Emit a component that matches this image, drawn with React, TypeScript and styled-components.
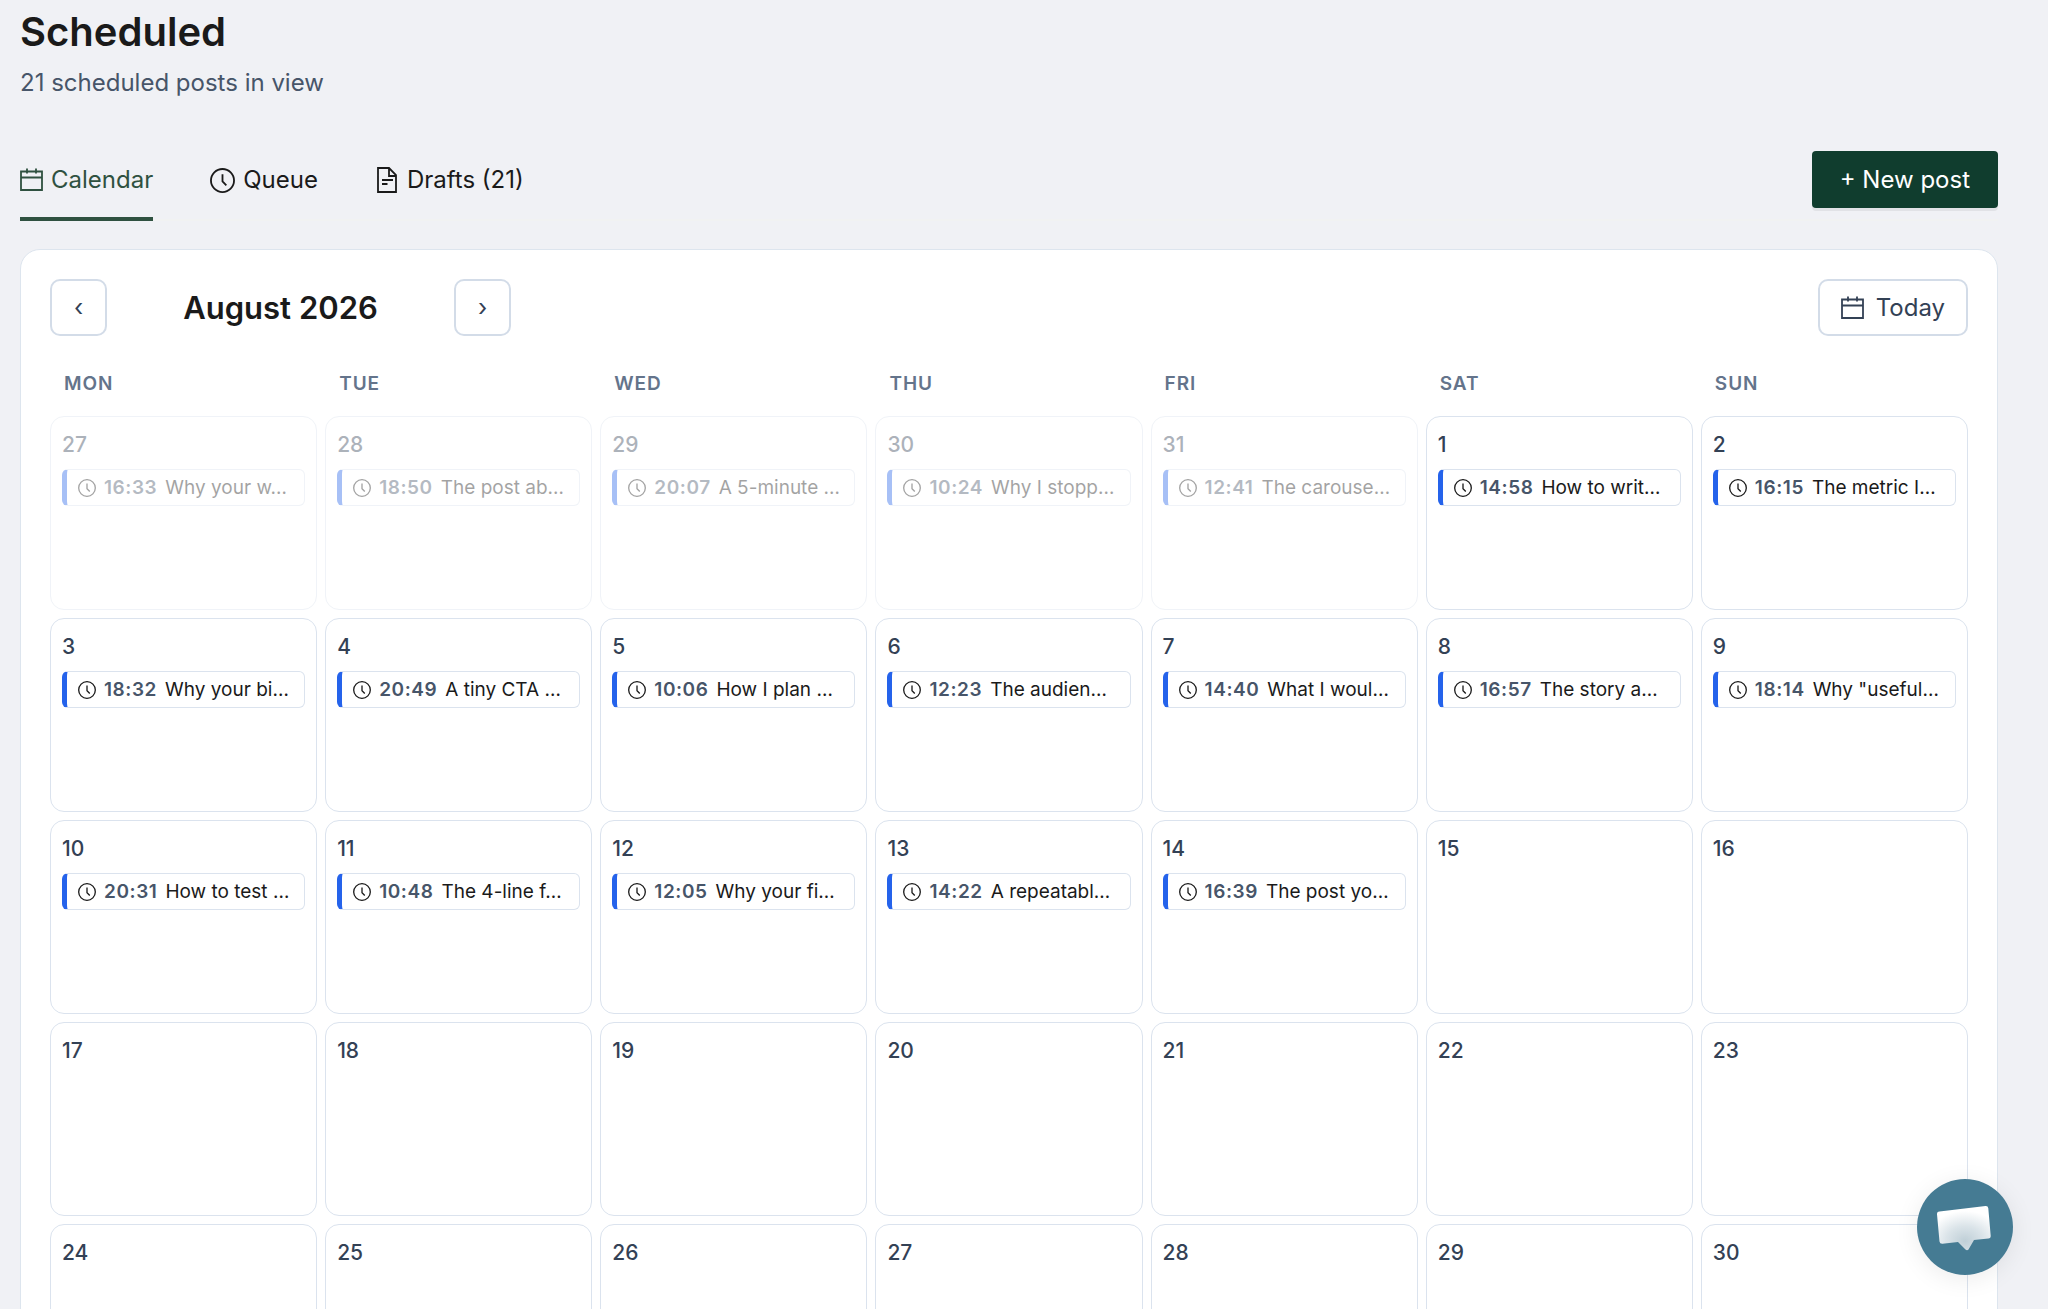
import React from "react";
import styled, { createGlobalStyle, css } from "styled-components";

const GlobalStyle = createGlobalStyle`
  *, *::before, *::after { box-sizing: border-box; }
  body {
    margin: 0;
    background: #f0f1f5;
    color: #1a1a1a;
    font-family: Inter, "Noto Sans", sans-serif;
    font-size: 24px;
    line-height: 32px;
  }
  button { font: inherit; cursor: pointer; }
`;

const Page = styled.main`
  height: 100vh;
  overflow: hidden;
  padding: 4px 50px 0 20px;
`;

const Title = styled.h1`
  margin: 0;
  font-size: 40px;
  line-height: 56px;
  font-weight: 600;
`;

const Subtitle = styled.p`
  margin: 7px 0 0;
  color: #475569;
`;

const TabBar = styled.div`
  display: flex;
  justify-content: space-between;
  align-items: flex-start;
  margin-top: 52px;
  border-bottom: 2px solid #f1f2f2;
`;

const TabList = styled.nav`
  display: flex;
  gap: 57px;
  margin-bottom: -2px;
`;

const Tab = styled.button<{ $active?: boolean }>`
  display: flex;
  align-items: center;
  gap: 8px;
  height: 70px;
  padding: 0 0 8px;
  border: 0;
  border-bottom: 4px solid ${(p) => (p.$active ? "#2f5140" : "transparent")};
  background: none;
  color: ${(p) => (p.$active ? "#2f5140" : "#1a1a1a")};
`;

const NewPost = styled.button`
  height: 57px;
  padding: 0 28px;
  border: 0;
  border-radius: 4px;
  background: #103d2e;
  color: #fff;
  box-shadow: 0 3px 0 rgba(0, 0, 0, 0.06);
`;

const Card = styled.section`
  margin-top: 28px;
  padding: 29px;
  border: 1px solid #dde5ee;
  border-radius: 20px;
  background: #fff;
`;

const Toolbar = styled.div`
  display: flex;
  align-items: center;
  justify-content: space-between;
`;

const MonthNav = styled.div`
  display: flex;
  align-items: center;
`;

const outlined = css`
  height: 57px;
  border: 2px solid #d3dce8;
  border-radius: 10px;
  background: #fff;
  color: #334155;
`;

const Arrow = styled.button`
  ${outlined}
  width: 57px;
  padding: 0;
`;

const Month = styled.h2`
  width: 347px;
  margin: 0;
  font-size: 31px;
  line-height: 40px;
  font-weight: 600;
  text-align: center;
`;

const Today = styled.button`
  ${outlined}
  display: flex;
  align-items: center;
  gap: 12px;
  padding: 0 21px;
`;

const weekGrid = css`
  display: grid;
  grid-template-columns: repeat(7, minmax(0, 1fr));
  gap: 8px;
`;

const Weekdays = styled.div`
  ${weekGrid}
  margin-top: 34px;
`;

const Weekday = styled.div`
  padding: 0 14px;
  color: #64748b;
  font-size: 19px;
  line-height: 28px;
  font-weight: 600;
  letter-spacing: 0.05em;
`;

const Days = styled.div`
  ${weekGrid}
  grid-auto-rows: 194px;
  margin-top: 18px;
`;

const Day = styled.div<{ $outside?: boolean }>`
  padding: 14px 11px;
  border: 1px solid #dbe3ee;
  border-radius: 14px;
  background: #fff;
  opacity: ${(p) => (p.$outside ? 0.4 : 1)};
`;

const DayNumber = styled.div`
  color: #334155;
  font-size: 21px;
  line-height: 28px;
  font-weight: 500;
`;

const Post = styled.button`
  display: flex;
  align-items: center;
  gap: 8px;
  width: 100%;
  height: 37px;
  margin-top: 10px;
  padding: 0 8px 0 11px;
  border: 1px solid #dbe3ee;
  border-left: 5px solid #2563eb;
  border-radius: 6px;
  background: #fff;
  color: #1a1a1a;
  font-size: 19px;
  line-height: 26px;
  text-align: left;
  white-space: nowrap;
`;

const Time = styled.span`
  color: #475569;
  font-weight: 600;
  letter-spacing: 0.03em;
`;

const PostTitle = styled.span`
  flex: 1;
  min-width: 0;
`;

const Chat = styled.button`
  position: fixed;
  right: 35px;
  bottom: 34px;
  width: 96px;
  height: 96px;
  padding: 0;
  border: 0;
  border-radius: 50%;
  background: #457b93;
  box-shadow: 0 4px 24px rgba(0, 0, 0, 0.08);
`;

const Icon = styled.svg`
  display: block;
  flex: none;
  fill: none;
  stroke: currentColor;
`;

const CalendarIcon = () => (
  <Icon width="23" height="24" viewBox="0 0 23 24" strokeWidth="1.8" aria-hidden="true">
    <path d="M1 3.500h21v18.500H1zM1 9.500h21M7 .5v5M16 .5v5" />
  </Icon>
);

const ClockIcon = ({ size }: { size: number }) => (
  <Icon width={size} height={size} viewBox="0 0 26 26" strokeWidth="1.9" aria-hidden="true">
    <circle cx="13" cy="13" r="12" />
    <path d="M13 6.500v7.500l4 4" />
  </Icon>
);

const DraftIcon = () => (
  <Icon width="24" height="26" viewBox="0 0 24 26" strokeWidth="1.8" aria-hidden="true">
    <path d="M3 1h11l7 7v17H3zM14 1v8h7M7 13h11M7 17h5.500" />
  </Icon>
);

const ChatIcon = () => (
  <svg width="96" height="96" viewBox="0 0 96 96" aria-hidden="true">
    <defs>
      <radialGradient id="bubble" gradientUnits="userSpaceOnUse" cx="0" cy="0" r="1" gradientTransform="translate(48 62) scale(38 30)">
        <stop offset="0" stopColor="#bfcfd7" />
        <stop offset="0.500" stopColor="#dbe4e9" />
        <stop offset="1" stopColor="#fff" />
      </radialGradient>
    </defs>
    <path
      fill="url(#bubble)"
      d="M22.500 32.500 68.500 27q2.500-.2 2.800 2.300l2.400 27.500q.2 2.500-2.300 2.800L57 61l-5.500 9.500q-1.500 1.500-3 0L41 63l-15.500 1.700q-2.700.2-3-2.300L20 35.300q-.2-2.500 2.500-2.800z"
    />
  </svg>
);

const WEEKDAYS = ["MON", "TUE", "WED", "THU", "FRI", "SAT", "SUN"];

const POSTS: [string, string][] = [
  ["16:33", "Why your w…"],
  ["18:50", "The post ab…"],
  ["20:07", "A 5-minute …"],
  ["10:24", "Why I stopp…"],
  ["12:41", "The carouse…"],
  ["14:58", "How to writ…"],
  ["16:15", "The metric I…"],
  ["18:32", "Why your bi…"],
  ["20:49", "A tiny CTA …"],
  ["10:06", "How I plan …"],
  ["12:23", "The audien…"],
  ["14:40", "What I woul…"],
  ["16:57", "The story a…"],
  ["18:14", 'Why "useful…'],
  ["20:31", "How to test …"],
  ["10:48", "The 4-line f…"],
  ["12:05", "Why your fi…"],
  ["14:22", "A repeatabl…"],
  ["16:39", "The post yo…"],
];

const FIRST = new Date(2026, 6, 27);

const DAYS = Array.from({ length: 35 }, (_, i) => {
  const date = new Date(FIRST);
  date.setDate(FIRST.getDate() + i);
  return { number: date.getDate(), outside: date.getMonth() !== 7, post: POSTS[i] };
});

export default function App() {
  return (
    <>
      <GlobalStyle />
      <Page>
        <Title>Scheduled</Title>
        <Subtitle>21 scheduled posts in view</Subtitle>
        <TabBar>
          <TabList>
            <Tab $active><CalendarIcon />Calendar</Tab>
            <Tab><ClockIcon size={25} />Queue</Tab>
            <Tab><DraftIcon />Drafts (21)</Tab>
          </TabList>
          <NewPost>+ New post</NewPost>
        </TabBar>
        <Card>
          <Toolbar>
            <MonthNav>
              <Arrow aria-label="Previous month">‹</Arrow>
              <Month>August 2026</Month>
              <Arrow aria-label="Next month">›</Arrow>
            </MonthNav>
            <Today><CalendarIcon />Today</Today>
          </Toolbar>
          <Weekdays>
            {WEEKDAYS.map((name) => <Weekday key={name}>{name}</Weekday>)}
          </Weekdays>
          <Days>
            {DAYS.map((day, i) => (
              <Day key={i} $outside={day.outside}>
                <DayNumber>{day.number}</DayNumber>
                {day.post && (
                  <Post>
                    <ClockIcon size={18} />
                    <Time>{day.post[0]}</Time>
                    <PostTitle>{day.post[1]}</PostTitle>
                  </Post>
                )}
              </Day>
            ))}
          </Days>
        </Card>
      </Page>
      <Chat aria-label="Open chat"><ChatIcon /></Chat>
    </>
  );
}
